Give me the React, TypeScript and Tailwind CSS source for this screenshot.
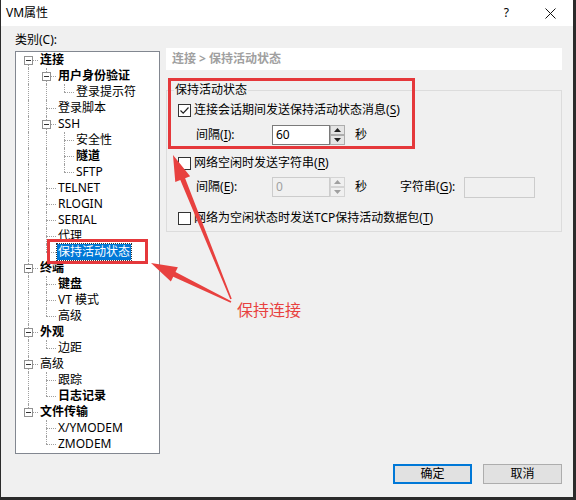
import React from 'react';

type TreeNode = { label: string; bold?: boolean; selected?: boolean; children?: TreeNode[] };
type FlatRow = { node: TreeNode; depth: number; lines: boolean[]; hasNext: boolean; first: boolean };

const TREE: TreeNode[] = [
  {
    label: '连接',
    bold: true,
    children: [
      { label: '用户身份验证', bold: true, children: [{ label: '登录提示符' }] },
      { label: '登录脚本' },
      { label: 'SSH', children: [{ label: '安全性' }, { label: '隧道', bold: true }, { label: 'SFTP' }] },
      { label: 'TELNET' },
      { label: 'RLOGIN' },
      { label: 'SERIAL' },
      { label: '代理' },
      { label: '保持活动状态', selected: true },
    ],
  },
  { label: '终端', bold: true, children: [{ label: '键盘', bold: true }, { label: 'VT 模式' }, { label: '高级' }] },
  { label: '外观', bold: true, children: [{ label: '边距' }] },
  { label: '高级', children: [{ label: '跟踪' }, { label: '日志记录', bold: true }] },
  { label: '文件传输', bold: true, children: [{ label: 'X/YMODEM' }, { label: 'ZMODEM' }] },
];

const flatten = (nodes: TreeNode[], depth: number, lines: boolean[], out: FlatRow[]) => {
  nodes.forEach((node, i) => {
    const hasNext = i < nodes.length - 1;
    out.push({ node, depth, lines, hasNext, first: depth === 0 && i === 0 });
    if (node.children) flatten(node.children, depth + 1, [...lines, hasNext], out);
  });
  return out;
};

const ROWS = flatten(TREE, 0, [], []);

// red annotation arrows, page coordinates
const ARROWS: { tail: [number, number]; tip: [number, number] }[] = [
  { tail: [231, 299], tip: [173, 155] },
  { tail: [231, 302], tip: [151, 263] },
];

const arrowPoints = (tail: [number, number], tip: [number, number]) => {
  const dx = tip[0] - tail[0];
  const dy = tip[1] - tail[1];
  const len = Math.hypot(dx, dy);
  const ux = dx / len;
  const uy = dy / len;
  const nx = -uy;
  const ny = ux;
  const bx = tip[0] - ux * 26;
  const by = tip[1] - uy * 26;
  const pts: [number, number][] = [
    [tail[0] + nx * 0.8, tail[1] + ny * 0.8],
    [bx + nx * 2.6, by + ny * 2.6],
    [bx + nx * 8, by + ny * 8],
    tip,
    [bx - nx * 8, by - ny * 8],
    [bx - nx * 2.6, by - ny * 2.6],
    [tail[0] - nx * 0.8, tail[1] - ny * 0.8],
  ];
  return pts.map((p) => p.join(',')).join(' ');
};

const TreeRow: React.FC<{ row: FlatRow }> = ({ row }) => {
  const { node, lines, hasNext, first } = row;
  return (
    <div className="flex h-[16px] items-center">
      {lines.map((l, i) => (
        <div key={i} className="relative h-full w-[18px] shrink-0">
          {l && <div className="absolute left-[8px] top-0 bottom-0 border-l border-dotted border-[#a0a0a0]" />}
        </div>
      ))}
      <div className="relative h-full w-[18px] shrink-0">
        {!first && <div className="absolute left-[8px] top-0 h-[8px] border-l border-dotted border-[#a0a0a0]" />}
        {hasNext && <div className="absolute left-[8px] top-[8px] bottom-0 border-l border-dotted border-[#a0a0a0]" />}
        <div className="absolute left-[8px] right-0 top-[8px] border-t border-dotted border-[#a0a0a0]" />
        {node.children && (
          <div className="absolute left-[4px] top-[4px] flex h-[9px] w-[9px] items-center justify-center border border-[#919191] bg-white">
            <div className="h-px w-[5px] bg-[#333]" />
          </div>
        )}
      </div>
      <span
        className={
          node.selected
            ? 'ml-[1px] whitespace-nowrap bg-[#0078d7] px-[1px] leading-[16px] text-white outline outline-1 outline-dotted outline-[#333]'
            : `ml-[2px] whitespace-nowrap leading-[16px] ${node.bold ? 'font-bold' : ''}`
        }
      >
        {node.label}
      </span>
    </div>
  );
};

const Checkbox: React.FC<{ checked?: boolean }> = ({ checked }) => (
  <div className="flex h-[13px] w-[13px] shrink-0 items-center justify-center border border-[#333] bg-white">
    {checked && (
      <svg width="11" height="11" viewBox="0 0 11 11">
        <path d="M1.5 5.5 L4.2 8.2 L9.5 2.5" fill="none" stroke="#222" strokeWidth="1.2" />
      </svg>
    )}
  </div>
);

const Spinner: React.FC<{ disabled?: boolean }> = ({ disabled }) => {
  const c = disabled ? '#a0a0a0' : '#222';
  const btn = `flex h-[10px] w-[15px] items-center justify-center border ${disabled ? 'border-[#d4d4d4] bg-[#f0f0f0]' : 'border-[#adadad] bg-[#e5e5e5]'}`;
  return (
    <div className="flex flex-col">
      <div className={btn}>
        <svg width="7" height="4" viewBox="0 0 7 4">
          <path d="M0 4 L3.5 0 L7 4 Z" fill={c} />
        </svg>
      </div>
      <div className={btn}>
        <svg width="7" height="4" viewBox="0 0 7 4">
          <path d="M0 0 L3.5 4 L7 0 Z" fill={c} />
        </svg>
      </div>
    </div>
  );
};

const Acc: React.FC<{ k: string }> = ({ k }) => (
  <>
    (<span className="underline underline-offset-2">{k}</span>)
  </>
);

const App: React.FC = () => {
  return (
    <div className="relative h-[500px] w-[576px] overflow-hidden bg-[#2b2b2b] font-['Noto_Sans','Noto_Sans_CJK_SC',sans-serif] text-[12px] text-black">
      <div className="ml-[1px] flex h-[497px] w-[572px] flex-col bg-[#f0f0f0]">
        {/* title bar */}
        <div className="flex h-[26px] shrink-0 items-center bg-white pl-[5px]">
          <span className="leading-[16px]">VM属性</span>
          <span className="ml-auto leading-[16px]">?</span>
          <svg className="ml-[36px] mr-[17px]" width="11" height="11" viewBox="0 0 11 11">
            <path d="M0.5 0.5 L10.5 10.5 M10.5 0.5 L0.5 10.5" stroke="#111" strokeWidth="1" />
          </svg>
        </div>

        <div className="flex min-h-0 flex-1">
          {/* category tree */}
          <div className="flex w-[165px] shrink-0 flex-col pl-[14px] pt-[6px]">
            <div className="h-[16px] leading-[16px]">类别(C):</div>
            <div className="mt-[3px] h-[403px] w-[145px] border border-[#828790] bg-white pl-[4px]">
              {ROWS.map((row, i) => (
                <TreeRow key={i} row={row} />
              ))}
            </div>
          </div>

          {/* settings page */}
          <div className="flex w-[396px] flex-col pt-[22px]">
            <div className="h-[22px] bg-white pl-[6px] font-bold leading-[22px] text-[#a0a0a0]">连接 &gt; 保持活动状态</div>

            <fieldset className="mt-[13px] border border-[#dcdcdc] pb-[5px] pl-[7px]">
              <legend className="px-[1px] leading-[14px]">保持活动状态</legend>

              <div className="ml-[4px] mt-[5px] flex h-[16px] items-center">
                <Checkbox checked />
                <span className="ml-[3px] leading-[16px]">
                  连接会话期间发送保持活动状态消息<Acc k="S" />
                </span>
              </div>

              <div className="ml-[22px] mt-[7px] flex h-[20px] items-center">
                <span className="w-[76px]">
                  间隔<Acc k="I" />:
                </span>
                <div className="h-[20px] w-[58px] border border-[#7a7a7a] bg-white pl-[3px] leading-[18px]">60</div>
                <Spinner />
                <span className="ml-[10px]">秒</span>
              </div>

              <div className="ml-[4px] mt-[10px] flex h-[16px] items-center">
                <Checkbox />
                <span className="ml-[3px] leading-[16px]">
                  网络空闲时发送字符串<Acc k="R" />
                </span>
              </div>

              <div className="ml-[22px] mt-[6px] flex h-[20px] items-center">
                <span className="w-[76px]">
                  间隔<Acc k="E" />:
                </span>
                <div className="h-[20px] w-[58px] border border-[#cccccc] bg-[#f0f0f0] pl-[3px] leading-[18px] text-[#a0a0a0]">0</div>
                <Spinner disabled />
                <span className="ml-[10px]">秒</span>
                <span className="ml-[33px] w-[64px]">
                  字符串<Acc k="G" />:
                </span>
                <div className="h-[21px] w-[71px] border border-[#cccccc] bg-[#f0f0f0]" />
              </div>

              <div className="ml-[4px] mt-[13px] flex h-[16px] items-center">
                <Checkbox />
                <span className="ml-[3px] leading-[16px]">
                  网络为空闲状态时发送TCP保持活动数据包<Acc k="T" />
                </span>
              </div>
            </fieldset>

            <div className="flex-1" />

            <div className="mb-[13px] flex justify-end gap-[11px]">
              <button className="h-[20px] w-[79px] border-2 border-[#0078d7] bg-[#e1e1e1] leading-[16px]">确定</button>
              <button className="h-[20px] w-[79px] border border-[#adadad] bg-[#e1e1e1] leading-[18px]">取消</button>
            </div>
          </div>
        </div>
      </div>

      {/* annotations */}
      <div className="pointer-events-none absolute left-[168px] top-[78px] h-[71px] w-[247px] border-[3px] border-[#e5383b]" />
      <div className="pointer-events-none absolute left-[47px] top-[239px] h-[25px] w-[101px] border-[3px] border-[#e5383b]" />
      <svg className="pointer-events-none absolute inset-0" width="576" height="500" viewBox="0 0 576 500">
        {ARROWS.map((a, i) => (
          <polygon key={i} points={arrowPoints(a.tail, a.tip)} fill="#e8413f" />
        ))}
      </svg>
      <div className="pointer-events-none absolute left-[237px] top-[299px] font-['Noto_Sans_CJK_SC',sans-serif] text-[16px] leading-[20px] text-[#e8413f]">
        保持连接
      </div>
    </div>
  );
};

export default App;
